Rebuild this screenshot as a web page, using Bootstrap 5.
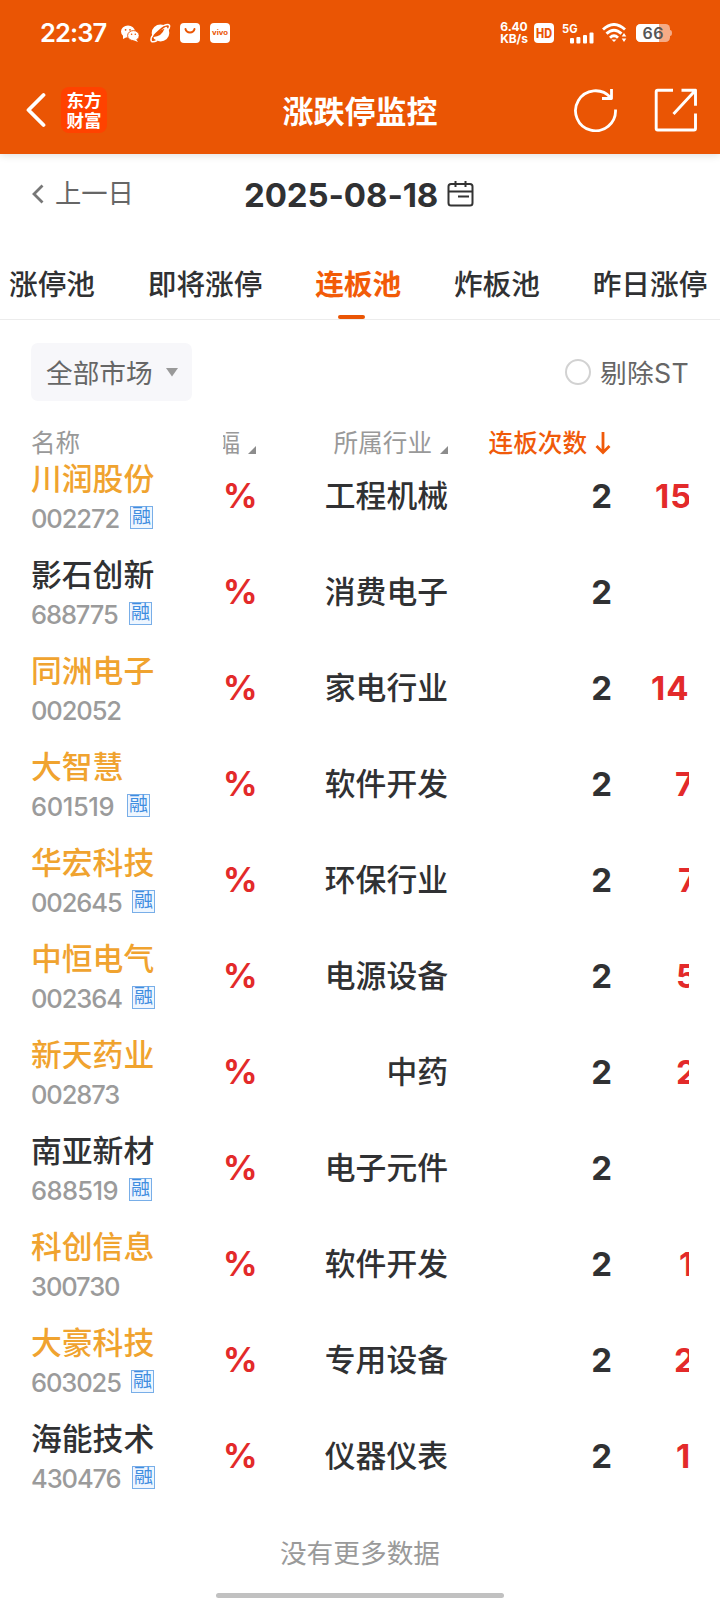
<!DOCTYPE html>
<html lang="zh-CN">
<head>
<meta charset="utf-8">
<meta name="viewport" content="width=device-width, initial-scale=1">
<title>涨跌停监控</title>
<link rel="stylesheet" href="https://cdn.jsdelivr.net/npm/bootstrap@5.3.0/dist/css/bootstrap.min.css">
<style>
  :root { --brand: #ea5504; --ink: #303133; --muted: #999; --up: #e32a2a; --gold: #f0a32f; }
  body { width: 720px; height: 1600px; overflow: hidden; background: #fff; color: var(--ink);
    font-family: Inter, "Noto Sans CJK SC", sans-serif; line-height: 1; }
  svg { display: block; flex: none; }
  .app-top { background: var(--brand); height: 154px; box-shadow: 0 1px 8px rgba(0,0,0,.14); }
  .status { height: 66px; padding: 0 48px 0 40px; }
  .clock { font-size: 25.5px; font-weight: 600; width: 65px; letter-spacing: -.9px; }
  .speed { font-size: 12px; font-weight: 700; line-height: 12px; width: 28px; letter-spacing: -.1px; white-space: nowrap; }
  .titlebar { height: 88px; padding: 0 22px 0 25px; }
  .page-title { font-size: 31px; font-weight: 700; left: 0; right: 0; top: 30px; text-align: center; line-height: 31px; pointer-events: none; }
  .logo { width: 46px; height: 46px; border-radius: 8px; background: #ff4200; font-family: "Noto Sans CJK SC", sans-serif;
    font-size: 17.5px; font-weight: 700; line-height: 20px; margin-left: 15px; }
  .daybar { height: 78px; padding-left: 31px; }
  .prev { font-size: 26.3px; color: #666; width: 213px; padding-top: 2px; }
  .date { font-size: 33px; font-weight: 700; width: 195px; white-space: nowrap; letter-spacing: -.1px; padding-top: 5px; }
  .tabs { height: 88px; gap: 52.7px; padding-left: 9px; font-size: 28.7px; font-weight: 500; border-bottom: 1px solid #ececec; white-space: nowrap; }
  .tab { height: 87px; padding-top: 38px; line-height: 30px; }
  .tab.on { color: #f25b08; font-weight: 700; }
  .tab.on::after { content: ""; position: absolute; left: 50%; bottom: 0; width: 27px; height: 4px; margin-left: -20.5px; border-radius: 2px; background: var(--brand); }
  .filters { height: 106px; padding: 23px 31px 0; color: #666; font-size: 26.7px; }
  .market { width: 161px; height: 58px; padding-left: 15px; background: #f7f7fa; border-radius: 7px; }
  .st-box { width: 26px; height: 26px; border: 2px solid #d2d2d2; border-radius: 50%; margin-right: 9px; }
  .grid { display: grid; grid-template-columns: 192px 33px 192px 162px 79px; padding-left: 31px; width: 689px; overflow: hidden; white-space: nowrap; }
  .head { height: 34px; font-size: 24.6px; line-height: 34px; color: var(--muted); }
  .clip { overflow: hidden; }
  .stock { height: 96px; }
  .name { font-size: 30.8px; line-height: 37px; font-weight: 500; }
  .gold { color: var(--gold); }
  .code { height: 43px; font-size: 25.5px; font-weight: 500; color: #9b9b9b; letter-spacing: -1.1px; }
  .margin-tag { width: 23px; height: 23px; border: 1px solid #78aee8; background: #eef6ff; color: #3f8de0; font-size: 19px; line-height: 20px; letter-spacing: 0; font-weight: 400; text-align: center; margin-top: -3px; }
  .cell { height: 72px; line-height: 71px; font-size: 30.8px; font-weight: 500; }
  .num { font-size: 33px; font-weight: 700; line-height: 72px; }
  .streak { margin-right: -2px; }
  .up { color: var(--up); }
  .pct { font-size: 34px; margin-right: -1px; }
  .seal { letter-spacing: 1px; }
  .tail { height: 84px; }
  .tail-text { color: #9a9a9a; font-size: 26.7px; padding-top: 24px; line-height: 27px; }
  .homebar { width: 288px; height: 5px; border-radius: 3px; background: #c1c1c1; margin-bottom: 2px; }
</style>
</head>
<body>
<header class="app-top text-white position-relative">
  <div class="status d-flex align-items-center">
    <span class="clock">22:37</span>
    <svg class="ms-3" width="18" height="17" viewBox="0 0 18 17" style="margin-right:11px"><ellipse cx="7" cy="6.500" rx="7" ry="6" fill="#fff"/><path d="M2 10l0 4 4-2z" fill="#fff"/><ellipse cx="12.400" cy="10.600" rx="5.800" ry="5" fill="#fff" stroke="#ea5504" stroke-width=".9"/><path d="M15 14l2 3-5-2z" fill="#fff"/><g fill="#ea5504"><circle cx="4.600" cy="4.800" r=".9"/><circle cx="9" cy="4.800" r=".9"/><circle cx="10.600" cy="9.300" r=".8"/><circle cx="14.300" cy="9.300" r=".8"/></g></svg>
    <svg width="21" height="20" viewBox="0 0 21 20" style="margin-right:9px"><ellipse cx="10.500" cy="10" rx="8.800" ry="8.500" fill="#fff"/><path d="M1.500 18C0 14 17 0 19.500 2.500" fill="none" stroke="#ea5504" stroke-width="1.600"/><path d="M5 12.500Q9 6 16 4.200Q13 12 5 12.500z" transform="translate(-1.500 1.500)" fill="#ea5504"/><path d="M1.500 18.500Q0 15.500 3 12M14 2.500Q18.500 .5 19.500 2.500Q20 4 18 7M1.500 18.500Q3.500 19.500 7 17.500" fill="none" stroke="#fff" stroke-width="1.500"/></svg>
    <svg width="20" height="20" viewBox="0 0 20 20" style="margin-right:10px"><rect width="20" height="20" rx="4" fill="#fff"/><path d="M5.500 6c1 4.500 8 4.500 9 0" fill="none" stroke="#ea5504" stroke-width="2" stroke-linecap="round"/></svg>
    <svg width="20" height="20" viewBox="0 0 20 20"><rect width="20" height="20" rx="4" fill="#fff"/><text x="10" y="12" font-size="6.500" font-weight="700" text-anchor="middle" textLength="16" lengthAdjust="spacingAndGlyphs" fill="#ea5504">vivo</text></svg>
    <div class="speed ms-auto text-center">6.40<br>KB/s</div>
    <svg width="20" height="20" viewBox="0 0 20 20" style="margin:0 8px 0 6px"><rect width="20" height="20" rx="4" fill="#fff"/><text x="10" y="14.500" font-size="12.500" font-weight="800" text-anchor="middle" textLength="16" lengthAdjust="spacingAndGlyphs" fill="#ea5504">HD</text></svg>
    <svg width="32" height="21" viewBox="0 0 32 21" style="margin-right:8px" fill="#fff"><text x="0" y="10" font-size="11.500" font-weight="700" textLength="15.500" lengthAdjust="spacingAndGlyphs">5G</text><rect x="8" y="15" width="4" height="5.500" rx="1"/><rect x="14.400" y="14" width="4" height="6.500" rx="1"/><rect x="21" y="12" width="4" height="8.500" rx="1"/><rect x="27.500" y="9.500" width="4" height="11" rx="1"/></svg>
    <svg width="25" height="20" viewBox="0 0 25 20" style="margin-right:9px" fill="none" stroke="#fff" stroke-width="2.900"><path d="M1 6.500Q12 -3.500 23 6.500M4.500 10.700Q12 4 19.500 10.700M8 14.700Q12 11 16 14.700"/><path d="M9.500 16.500h5L12 19z" fill="#fff" stroke="none"/><path d="M22 10l2.300 3.600h-4.600zM22 19l2.300-3.600h-4.600z" fill="#fff" stroke="none"/></svg>
    <svg width="36" height="20" viewBox="0 0 36 20"><rect y="1" width="34" height="18" rx="4.500" fill="#f5ab86"/><path d="M4.500 1H23v18H4.500A4.500 4.500 0 010 14.500v-9A4.500 4.500 0 014.500 1z" fill="#fff"/><path d="M34 7q2 0 2 3t-2 3z" fill="#f5ab86"/><text x="17" y="15.800" font-size="16" font-weight="600" text-anchor="middle" textLength="21" fill="#555">66</text></svg>
  </div>
  <div class="titlebar d-flex align-items-center position-relative">
    <svg width="21" height="36" viewBox="0 0 21 36"><path d="M18.500 3L3.500 18l15 15" fill="none" stroke="#fff" stroke-width="3.800" stroke-linecap="round" stroke-linejoin="round"/></svg>
    <div class="logo d-flex flex-column align-items-center justify-content-center"><span>东方</span><span>财富</span></div>
    <h1 class="page-title position-absolute m-0">涨跌停监控</h1>
    <svg class="ms-auto" width="44" height="44" viewBox="0 0 44 44" fill="none" stroke="#fff" stroke-width="2.800" style="margin-right:37px"><path d="M42.500 21.500A20 20 0 1 1 37.500 9.500M38.500 1v9.500H29" stroke-linejoin="round"/></svg>
    <svg width="44" height="44" viewBox="0 0 44 44" fill="none" stroke="#fff" stroke-width="2.900" stroke-linejoin="round"><path d="M19 2.200H3.700Q2.200 2.200 2.200 3.700V40.500Q2.200 42 3.700 42H40Q41.500 42 41.500 40.500V25.500M27.500 2.200h14v15.500M41.500 2.200L19.500 26"/></svg>
  </div>
</header>

<div class="daybar d-flex align-items-center">
  <a class="prev d-flex align-items-center text-decoration-none" href="#"><svg width="14" height="22" viewBox="0 0 14 22" style="margin-right:10px"><path d="M11.500 2.500L3 11l8.500 8.500" fill="none" stroke="#777" stroke-width="2.800"/></svg>上一日</a>
  <span class="date">2025-08-18</span>
  <svg width="28" height="28" viewBox="0 0 28 28" fill="none" stroke="#333" stroke-width="2" style="margin:2px 0 0 8px"><rect x="1.500" y="4" width="24" height="21.500" rx="2.500"/><path d="M1.500 11.500h24M8.500 1v6M18.500 1v6M11 16.500h11"/></svg>
</div>

<nav class="tabs d-flex">
  <div class="tab">涨停池</div><div class="tab">即将涨停</div><div class="tab on position-relative">连板池</div><div class="tab">炸板池</div><div class="tab">昨日涨停</div>
</nav>

<div class="filters d-flex justify-content-between align-items-start">
  <div class="market d-flex align-items-center"><span style="padding-top:2px">全部市场</span><svg width="12" height="9" viewBox="0 0 12 9" style="margin-left:13px"><path d="M0 0h12L6 8.500z" fill="#999"/></svg></div>
  <div class="d-flex align-items-center" style="height:58px"><span class="st-box"></span><span style="padding-top:2px;letter-spacing:.3px">剔除ST</span></div>
</div>

<div class="grid head">
  <div>名称</div>
  <div class="clip d-flex justify-content-end align-items-center"><span>幅</span><svg width="8" height="8" viewBox="0 0 8 8" style="margin:14px 0 0 8px"><path d="M8 0v8H0z" fill="#8c8c8c"/></svg></div>
  <div class="d-flex justify-content-end align-items-center">所属行业<svg width="8" height="8" viewBox="0 0 8 8" style="margin:14px 0 0 8px"><path d="M8 0v8H0z" fill="#8c8c8c"/></svg></div>
  <div class="d-flex justify-content-end align-items-center" style="color:#f05a0a;font-weight:500">连板次数<svg width="16" height="24" viewBox="0 0 16 24" style="margin:0 -1px 0 8px"><path d="M8 1v20M1.500 15L8 21.500 14.500 15" fill="none" stroke="#f05a0a" stroke-width="2.800"/></svg></div>
</div>

<main>
  <div class="grid stock"><div><div class="name gold">川润股份</div><div class="code d-flex align-items-center"><span style="width:99px">002272</span><span class="margin-tag">融</span></div></div><div class="num up pct text-end">%</div><div class="cell text-end">工程机械</div><div class="num streak text-end">2</div><div class="num up seal" style="padding-left:45px">15</div></div>
  <div class="grid stock"><div><div class="name">影石创新</div><div class="code d-flex align-items-center"><span style="width:98px">688775</span><span class="margin-tag">融</span></div></div><div class="num up pct text-end">%</div><div class="cell text-end">消费电子</div><div class="num streak text-end">2</div></div>
  <div class="grid stock"><div><div class="name gold">同洲电子</div><div class="code d-flex align-items-center"><span>002052</span></div></div><div class="num up pct text-end">%</div><div class="cell text-end">家电行业</div><div class="num streak text-end">2</div><div class="num up seal" style="padding-left:41px">14</div></div>
  <div class="grid stock"><div><div class="name gold">大智慧</div><div class="code d-flex align-items-center"><span style="width:96px;letter-spacing:-.4px">601519</span><span class="margin-tag">融</span></div></div><div class="num up pct text-end">%</div><div class="cell text-end">软件开发</div><div class="num streak text-end">2</div><div class="num up" style="padding-left:65px">7</div></div>
  <div class="grid stock"><div><div class="name gold">华宏科技</div><div class="code d-flex align-items-center"><span style="width:101px">002645</span><span class="margin-tag">融</span></div></div><div class="num up pct text-end">%</div><div class="cell text-end">环保行业</div><div class="num streak text-end">2</div><div class="num up" style="padding-left:68px">7</div></div>
  <div class="grid stock"><div><div class="name gold">中恒电气</div><div class="code d-flex align-items-center"><span style="width:101px">002364</span><span class="margin-tag">融</span></div></div><div class="num up pct text-end">%</div><div class="cell text-end">电源设备</div><div class="num streak text-end">2</div><div class="num up" style="padding-left:66px">5</div></div>
  <div class="grid stock"><div><div class="name gold">新天药业</div><div class="code d-flex align-items-center"><span>002873</span></div></div><div class="num up pct text-end">%</div><div class="cell text-end">中药</div><div class="num streak text-end">2</div><div class="num up" style="padding-left:66px">2</div></div>
  <div class="grid stock"><div><div class="name">南亚新材</div><div class="code d-flex align-items-center"><span style="width:98px;letter-spacing:-.6px">688519</span><span class="margin-tag">融</span></div></div><div class="num up pct text-end">%</div><div class="cell text-end">电子元件</div><div class="num streak text-end">2</div></div>
  <div class="grid stock"><div><div class="name gold">科创信息</div><div class="code d-flex align-items-center"><span>300730</span></div></div><div class="num up pct text-end">%</div><div class="cell text-end">软件开发</div><div class="num streak text-end">2</div><div class="num up" style="padding-left:69px">1</div></div>
  <div class="grid stock"><div><div class="name gold">大豪科技</div><div class="code d-flex align-items-center"><span style="width:100px">603025</span><span class="margin-tag">融</span></div></div><div class="num up pct text-end">%</div><div class="cell text-end">专用设备</div><div class="num streak text-end">2</div><div class="num up" style="padding-left:64px">2</div></div>
  <div class="grid stock"><div><div class="name">海能技术</div><div class="code d-flex align-items-center"><span style="width:101px">430476</span><span class="margin-tag">融</span></div></div><div class="num up pct text-end">%</div><div class="cell text-end">仪器仪表</div><div class="num streak text-end">2</div><div class="num up" style="padding-left:66px">1</div></div>
</main>

<footer class="tail d-flex flex-column align-items-center justify-content-between">
  <div class="tail-text">没有更多数据</div>
  <div class="homebar"></div>
</footer>
<script src="https://cdn.jsdelivr.net/npm/bootstrap@5.3.0/dist/js/bootstrap.bundle.min.js"></script>
</body>
</html>
